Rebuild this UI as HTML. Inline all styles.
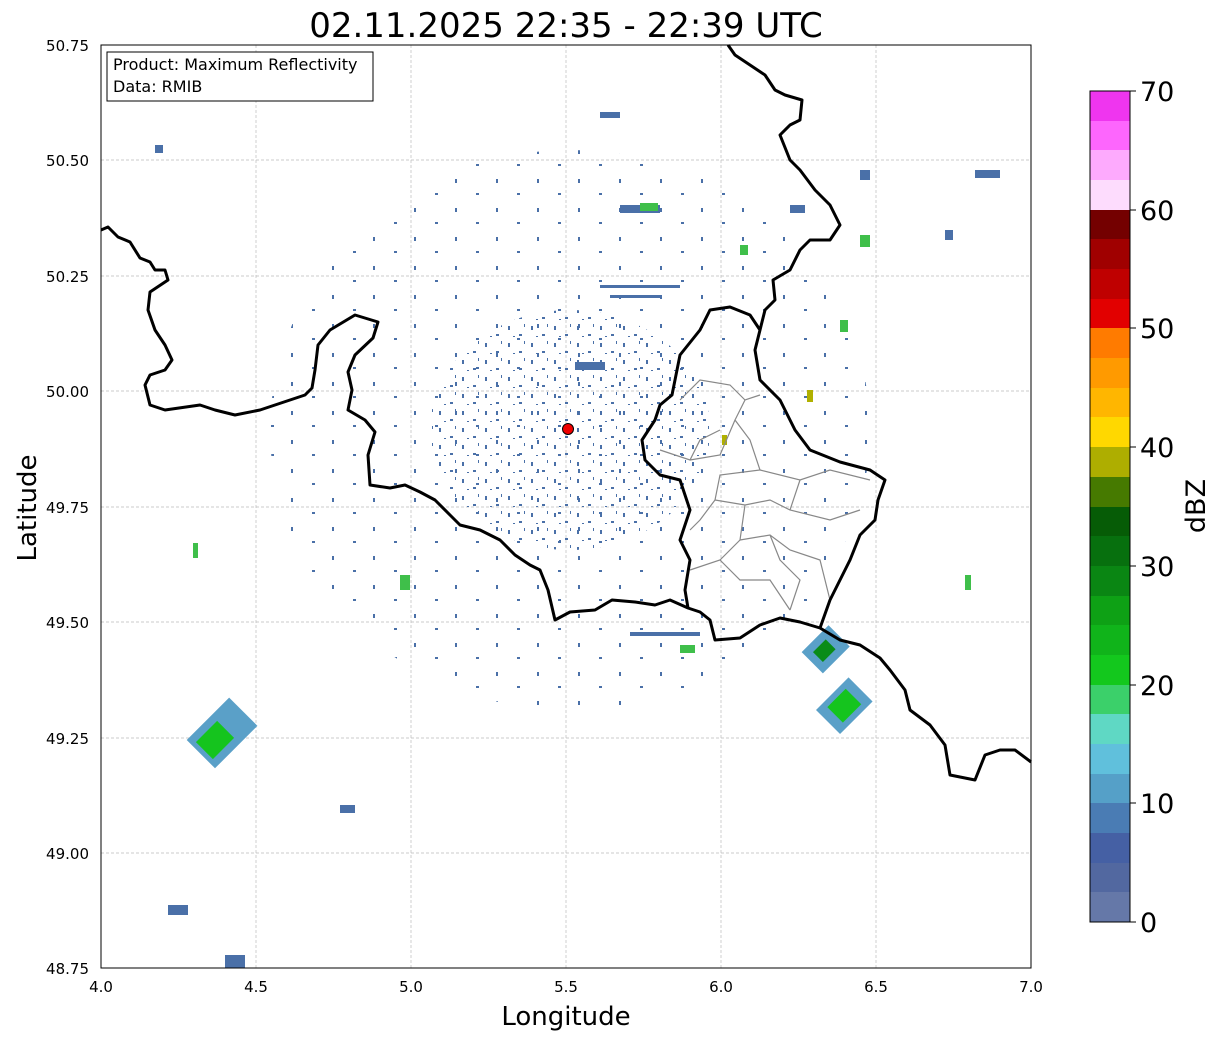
<!DOCTYPE html>
<html><head><meta charset="utf-8"><style>
body{margin:0;background:#fff;font-family:"Liberation Sans","DejaVu Sans",sans-serif}
</style></head><body>
<svg width="1219" height="1040" xmlns="http://www.w3.org/2000/svg" font-family="DejaVu Sans, Liberation Sans, sans-serif">
<defs>
<pattern id="sp" width="23" height="17" patternUnits="userSpaceOnUse">
<rect x="2" y="3" width="2" height="4" fill="#4a70a8"/><rect x="13" y="11" width="3" height="2" fill="#4a70a8"/><rect x="18" y="1" width="1" height="3" fill="#4a70a8"/><rect x="7" y="13" width="2" height="1" fill="#4a70a8"/>
</pattern>
<pattern id="sp2" width="41" height="29" patternUnits="userSpaceOnUse">
<rect x="4" y="5" width="2" height="4" fill="#4a70a8"/><rect x="25" y="19" width="3" height="2" fill="#4a70a8"/>
</pattern>
</defs>
<rect width="1219" height="1040" fill="#fff"/>
<text x="566" y="37" font-size="34" text-anchor="middle">02.11.2025 22:35 - 22:39 UTC</text>
<g stroke="#bbb" stroke-width="0.7" stroke-dasharray="3,2">
<line x1="256" y1="45" x2="256" y2="968"/><line x1="411" y1="45" x2="411" y2="968"/><line x1="566" y1="45" x2="566" y2="968"/><line x1="721" y1="45" x2="721" y2="968"/><line x1="876" y1="45" x2="876" y2="968"/>
<line x1="101" y1="160" x2="1031" y2="160"/><line x1="101" y1="276" x2="1031" y2="276"/><line x1="101" y1="391" x2="1031" y2="391"/><line x1="101" y1="507" x2="1031" y2="507"/><line x1="101" y1="622" x2="1031" y2="622"/><line x1="101" y1="738" x2="1031" y2="738"/><line x1="101" y1="853" x2="1031" y2="853"/>
</g>
<ellipse cx="570" cy="430" rx="140" ry="120" fill="url(#sp)"/>
<ellipse cx="570" cy="430" rx="300" ry="280" fill="url(#sp2)"/>
<g fill="#4a70a8">
<rect x="600" y="285" width="80" height="3"/><rect x="610" y="295" width="50" height="3"/>
<rect x="620" y="205" width="40" height="8"/><rect x="575" y="362" width="30" height="8"/>
<rect x="155" y="145" width="8" height="8"/><rect x="790" y="205" width="15" height="8"/><rect x="975" y="170" width="25" height="8"/>
<rect x="340" y="805" width="15" height="8"/><rect x="168" y="905" width="20" height="10"/><rect x="225" y="955" width="20" height="13"/>
<rect x="630" y="632" width="70" height="4"/>
<rect x="600" y="112" width="20" height="6"/><rect x="945" y="230" width="8" height="10"/><rect x="860" y="170" width="10" height="10"/>
</g>
<g fill="#3fbf4a">
<rect x="195" y="700" width="40" height="60" fill="#5aa0c8" transform="rotate(45 215 740)"/>
<rect x="203" y="725" width="24" height="30" fill="#15c41e" transform="rotate(45 215 740)"/>
<rect x="810" y="630" width="30" height="38" fill="#5aa0c8" transform="rotate(45 825 650)"/>
<rect x="818" y="642" width="14" height="18" fill="#0a8c18" transform="rotate(45 825 650)"/>
<rect x="828" y="683" width="34" height="46" fill="#5aa0c8" transform="rotate(45 845 705)"/>
<rect x="834" y="693" width="22" height="26" fill="#15c41e" transform="rotate(45 845 705)"/>
<rect x="640" y="203" width="18" height="8"/><rect x="860" y="235" width="10" height="12"/><rect x="740" y="245" width="8" height="10"/>
<rect x="965" y="575" width="6" height="15"/><rect x="400" y="575" width="10" height="15"/><rect x="680" y="645" width="15" height="8"/>
<rect x="193" y="543" width="5" height="15"/><rect x="840" y="320" width="8" height="12"/>
</g>
<rect x="807" y="390" width="6" height="12" fill="#b0b000"/><rect x="722" y="435" width="5" height="10" fill="#b0b000"/>
<g fill="none" stroke="#888" stroke-width="1.2">
<path d="M680 400 L700 380 L730 385 L745 400 L760 395 M745 400 L735 420 L750 440 L760 470 L720 475 L715 500 L700 520 L690 530 M760 470 L800 480 L830 470 L870 480 M800 480 L790 510 L830 520 L860 510 M715 500 L745 505 L770 500 L790 510 M745 505 L740 540 L720 560 L690 570 M740 540 L770 535 L790 550 L820 560 L830 600 M770 535 L780 560 L800 580 L790 610 M720 560 L740 580 L770 580 L790 610 M690 460 L720 455 L735 420 M660 450 L690 460 L700 440 L720 430"/>
</g>
<g fill="none" stroke="#000" stroke-width="3" stroke-linejoin="round">
<path d="M101 230 L108 227 L118 237 L130 242 L140 258 L150 262 L155 270 L165 270 L168 280 L150 292 L148 310 L155 330 L165 345 L172 360 L165 370 L150 375 L145 385 L150 405 L165 410 L200 405 L215 410 L235 415 L260 410 L275 405 L290 400 L305 395 L312 388 L315 370 L318 345 L330 330 L355 315 L378 322 L373 338 L355 355 L348 372 L352 390 L348 410 L365 420 L375 432 L368 455 L370 485 L390 488 L405 485 L420 492 L435 500 L450 515 L460 525 L480 530 L500 540 L515 555 L530 565 L540 570 L548 590 L555 620 L570 612 L595 610 L612 600 L635 602 L655 605 L670 600 L688 608 L700 612 L710 620 L715 640 L740 638 L760 625 L780 618 L800 622 L820 628 L840 640 L860 645 L880 658 L890 670 L905 690 L910 710 L930 725 L945 745 L950 775 L975 780 L985 755 L1000 750 L1015 750 L1031 762"/>
<path d="M688 608 L685 590 L690 560 L680 540 L690 510 L680 480 L660 475 L645 460 L642 440 L655 420 L660 405 L672 395 L675 380 L680 355 L700 330 L710 310 L730 307 L750 315 L760 330 L755 350 L760 380 L780 400 L795 430 L810 450 L840 462 L870 470 L885 480 L878 500 L875 520 L860 535 L850 560 L840 580 L830 600 L820 628"/>
<path d="M760 330 L765 310 L775 300 L773 280 L790 270 L800 250 L810 240 L830 240 L840 225 L830 205 L815 190 L800 170 L790 160 L780 135 L790 125 L800 120 L802 100 L785 95 L775 90 L765 75 L750 65 L735 55 L728 45"/>
</g>
<circle cx="568" cy="429" r="5.5" fill="#e00" stroke="#000" stroke-width="1"/>
<rect x="101" y="45" width="930" height="923" fill="none" stroke="#000" stroke-width="1"/>
<rect x="107" y="52" width="266" height="49" fill="#fff" stroke="#000" stroke-width="1"/>
<text x="113" y="70" font-size="16">Product: Maximum Reflectivity</text>
<text x="113" y="92" font-size="16">Data: RMIB</text>
<g font-size="15" text-anchor="end">
<text x="89" y="51">50.75</text><text x="89" y="166">50.50</text><text x="89" y="282">50.25</text><text x="89" y="397">50.00</text><text x="89" y="513">49.75</text><text x="89" y="628">49.50</text><text x="89" y="744">49.25</text><text x="89" y="859">49.00</text><text x="89" y="974">48.75</text>
</g>
<g font-size="15" text-anchor="middle">
<text x="101" y="992">4.0</text><text x="256" y="992">4.5</text><text x="411" y="992">5.0</text><text x="566" y="992">5.5</text><text x="721" y="992">6.0</text><text x="876" y="992">6.5</text><text x="1031" y="992">7.0</text>
</g>
<text x="566" y="1025" font-size="26" text-anchor="middle">Longitude</text>
<text x="36" y="508" font-size="26" text-anchor="middle" transform="rotate(-90 36 508)">Latitude</text>
<g>
<rect x="1090" y="91" width="40" height="30" fill="#ef35ef"/>
<rect x="1090" y="121" width="40" height="30" fill="#fd66fd"/>
<rect x="1090" y="150" width="40" height="30" fill="#fdaafd"/>
<rect x="1090" y="180" width="40" height="30" fill="#fddcfd"/>
<rect x="1090" y="210" width="40" height="30" fill="#740000"/>
<rect x="1090" y="239" width="40" height="30" fill="#a00000"/>
<rect x="1090" y="269" width="40" height="30" fill="#bf0000"/>
<rect x="1090" y="299" width="40" height="30" fill="#e20000"/>
<rect x="1090" y="328" width="40" height="30" fill="#ff7b00"/>
<rect x="1090" y="358" width="40" height="30" fill="#ff9a00"/>
<rect x="1090" y="388" width="40" height="30" fill="#ffb600"/>
<rect x="1090" y="417" width="40" height="30" fill="#ffd800"/>
<rect x="1090" y="447" width="40" height="30" fill="#aeae00"/>
<rect x="1090" y="477" width="40" height="30" fill="#467a00"/>
<rect x="1090" y="507" width="40" height="30" fill="#065c06"/>
<rect x="1090" y="536" width="40" height="30" fill="#07700e"/>
<rect x="1090" y="566" width="40" height="30" fill="#0a8613"/>
<rect x="1090" y="596" width="40" height="30" fill="#0ea115"/>
<rect x="1090" y="625" width="40" height="30" fill="#10b41a"/>
<rect x="1090" y="655" width="40" height="30" fill="#13c81d"/>
<rect x="1090" y="685" width="40" height="30" fill="#3bd06a"/>
<rect x="1090" y="714" width="40" height="30" fill="#5fd8c4"/>
<rect x="1090" y="744" width="40" height="30" fill="#60c0dc"/>
<rect x="1090" y="774" width="40" height="30" fill="#55a0c8"/>
<rect x="1090" y="803" width="40" height="30" fill="#4a7cb4"/>
<rect x="1090" y="833" width="40" height="30" fill="#4560a4"/>
<rect x="1090" y="863" width="40" height="30" fill="#5268a0"/>
<rect x="1090" y="892" width="40" height="30" fill="#6578a8"/>
<rect x="1090" y="91" width="40" height="831" fill="none" stroke="#000" stroke-width="1"/>
</g>
<g font-size="27">
<line x1="1130" y1="922" x2="1136" y2="922" stroke="#000"/><text x="1140" y="932">0</text>
<line x1="1130" y1="803" x2="1136" y2="803" stroke="#000"/><text x="1140" y="813">10</text>
<line x1="1130" y1="685" x2="1136" y2="685" stroke="#000"/><text x="1140" y="695">20</text>
<line x1="1130" y1="566" x2="1136" y2="566" stroke="#000"/><text x="1140" y="576">30</text>
<line x1="1130" y1="447" x2="1136" y2="447" stroke="#000"/><text x="1140" y="457">40</text>
<line x1="1130" y1="328" x2="1136" y2="328" stroke="#000"/><text x="1140" y="338">50</text>
<line x1="1130" y1="210" x2="1136" y2="210" stroke="#000"/><text x="1140" y="220">60</text>
<line x1="1130" y1="91" x2="1136" y2="91" stroke="#000"/><text x="1140" y="101">70</text>
</g>
<text x="1205" y="506" font-size="27" text-anchor="middle" transform="rotate(-90 1205 506)">dBZ</text>
</svg>
</body></html>
